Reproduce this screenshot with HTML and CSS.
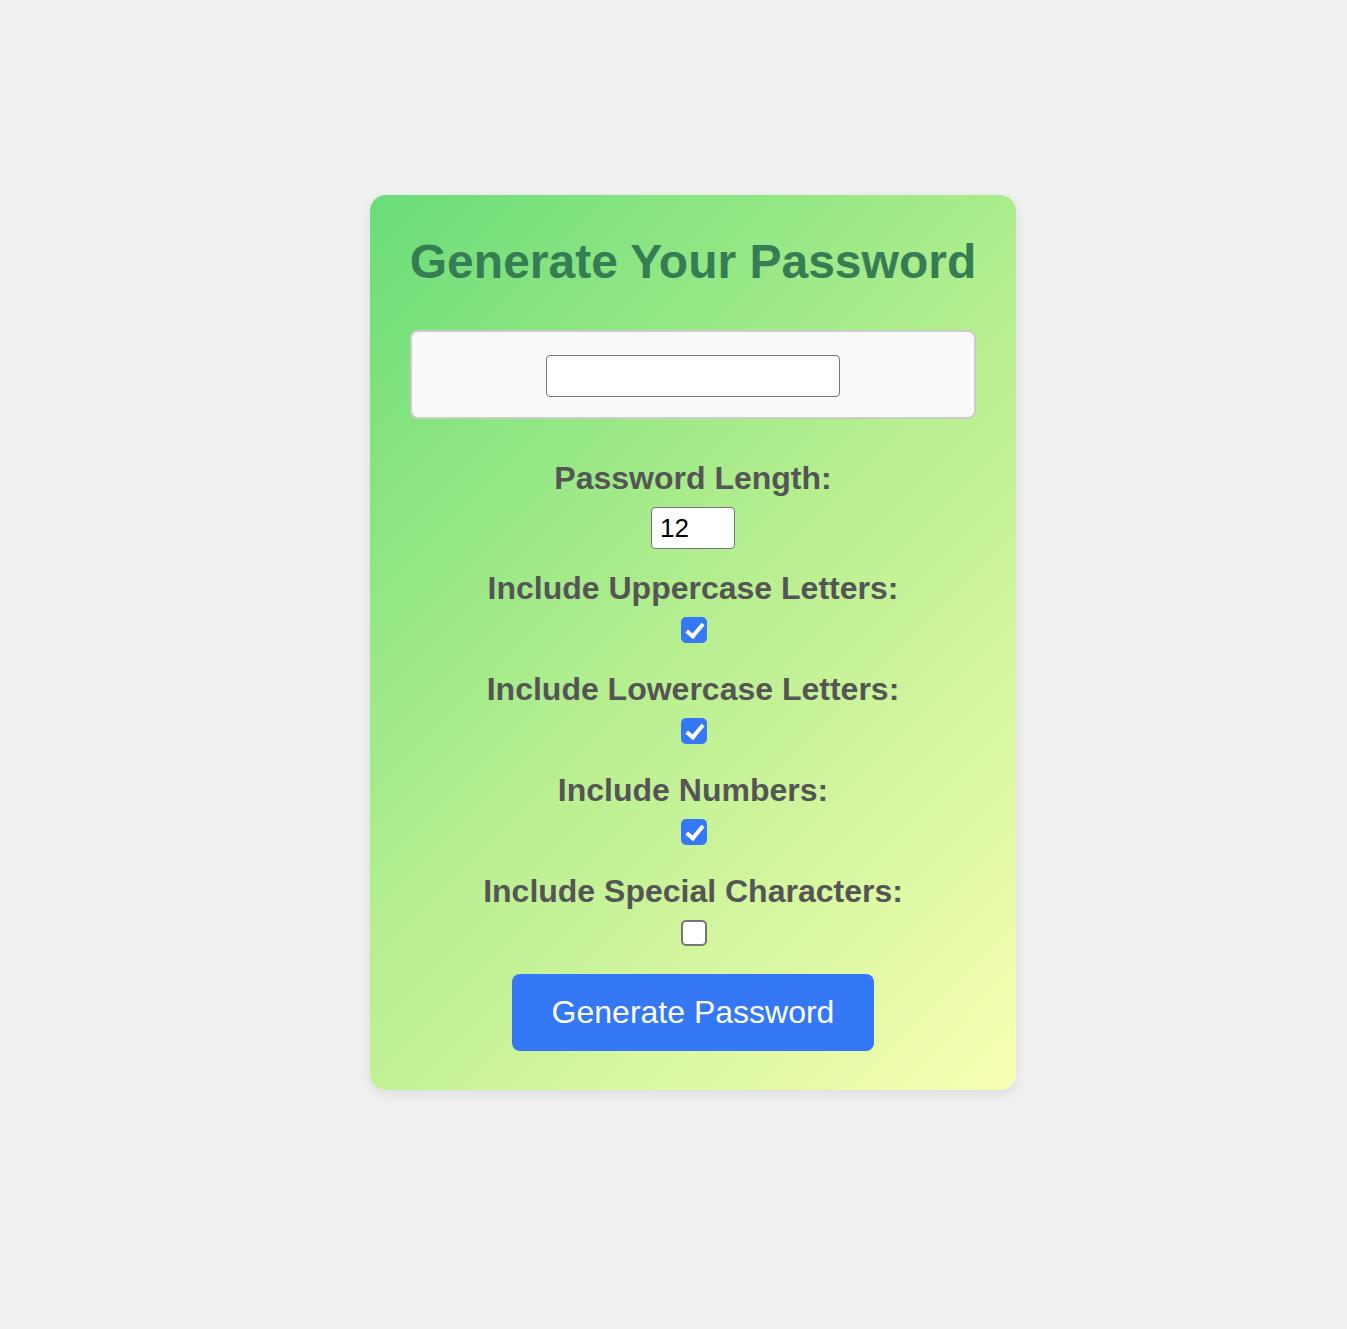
FILE: index.html
```html
<!DOCTYPE html>
<html lang="en">
<head>
<meta charset="utf-8">
<title>Password Generator</title>
<link rel="stylesheet" href="styles.css">
</head>
<body>
<main class="page">
  <section class="card">
    <h1 class="title">Generate Your Password</h1>
    <div class="output">
      <input class="output-field" type="text" readonly>
    </div>
    <div class="options">
      <label class="opt-label" for="len">Password Length:</label>
      <input class="num" id="len" type="number" value="12">
      <label class="opt-label" for="up">Include Uppercase Letters:</label>
      <input class="check" id="up" type="checkbox" checked>
      <label class="opt-label" for="low">Include Lowercase Letters:</label>
      <input class="check" id="low" type="checkbox" checked>
      <label class="opt-label" for="nums">Include Numbers:</label>
      <input class="check" id="nums" type="checkbox" checked>
      <label class="opt-label" for="spec">Include Special Characters:</label>
      <input class="check" id="spec" type="checkbox">
    </div>
    <button class="gen-btn" type="button">Generate Password</button>
  </section>
</main>
</body>
</html>
```

FILE: styles.css
```css
html, body {
  margin: 0;
  padding: 0;
  background: #f0f0f0;
  font-family: "Liberation Sans", Arial, Helvetica, sans-serif;
}

.page {
  min-height: 1329px;
  box-sizing: border-box;
  display: flex;
  justify-content: center;
  align-items: flex-start;
  padding: 195px 0 0 39px;
}

.card {
  width: 646px;
  box-sizing: border-box;
  padding: 39px 40px 39px;
  border-radius: 16px;
  background: linear-gradient(135deg, #69dd78 0%, #b8ef90 50%, #f9ffb2 100%);
  box-shadow: 0 4px 12px rgba(0, 0, 0, 0.08);
  display: flex;
  flex-direction: column;
  align-items: center;
}

.title {
  margin: 0 0 41px;
  font-size: 48px;
  line-height: 55px;
  font-weight: bold;
  color: #367d53;
  white-space: nowrap;
}

.output {
  width: 100%;
  box-sizing: border-box;
  height: 89px;
  padding-top: 2px;
  background: #f9f9f9;
  border: 2px solid #cccccc;
  border-radius: 8px;
  display: flex;
  align-items: center;
  justify-content: center;
}

.output-field {
  width: 294px;
  height: 42px;
  box-sizing: border-box;
  border: 1px solid #767676;
  border-radius: 4px;
  background: #fff;
  font-size: 22px;
  padding: 0 8px;
}

.options {
  display: flex;
  flex-direction: column;
  align-items: center;
  margin-top: 39px;
}

.opt-label {
  font-size: 32px;
  line-height: 37px;
  font-weight: bold;
  color: #555555;
  margin-top: 2px;
  margin-bottom: 10px;
  white-space: nowrap;
}

.num {
  width: 84px;
  height: 42px;
  box-sizing: border-box;
  border: 1px solid #767676;
  border-radius: 4px;
  background: #fff;
  font-family: "Liberation Sans", Arial, sans-serif;
  font-size: 26px;
  padding: 0 8px;
  color: #000;
  margin: 0 0 19px;
  -moz-appearance: textfield;
}

.num::-webkit-inner-spin-button,
.num::-webkit-outer-spin-button {
  -webkit-appearance: none;
  margin: 0;
}

.check {
  -webkit-appearance: none;
  appearance: none;
  position: relative;
  width: 26px;
  height: 26px;
  box-sizing: border-box;
  margin: 0 0 26px 2px;
  border: 2px solid #767676;
  border-radius: 5px;
  background: #fff;
}

.check:checked {
  background: #3478f6;
  border-color: #3478f6;
}

.check:checked::after {
  content: "";
  position: absolute;
  left: 7px;
  top: 1px;
  width: 6px;
  height: 14px;
  border: solid #fff;
  border-width: 0 4px 4px 0;
  transform: rotate(40deg);
}

.options .check:last-child {
  margin-bottom: 28px;
}

.gen-btn {
  width: 362px;
  height: 77px;
  border: none;
  border-radius: 8px;
  background: #3478f6;
  color: #fff;
  font-family: "Liberation Sans", Arial, sans-serif;
  font-size: 32px;
}
```
